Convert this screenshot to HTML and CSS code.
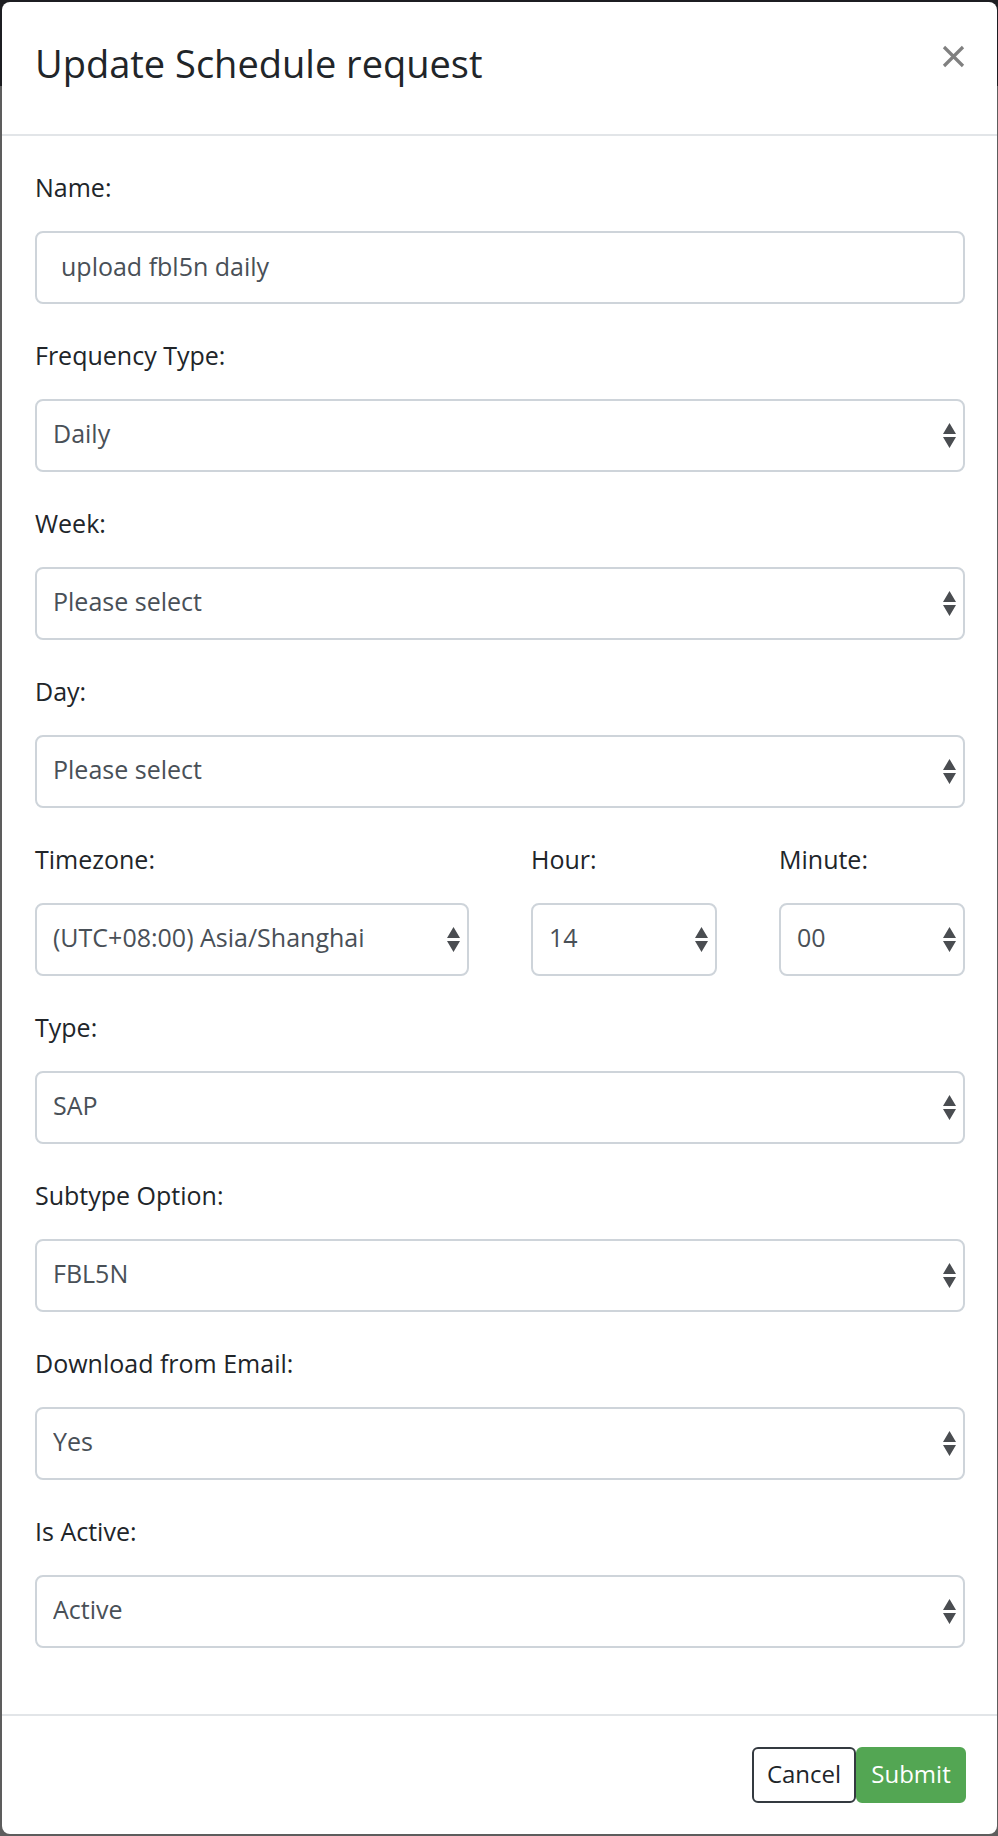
FILE: index.html
```html
<!DOCTYPE html>
<html lang="en">
<head>
<meta charset="utf-8">
<title>Update Schedule request</title>
<link rel="stylesheet" href="styles.css">
</head>
<body>
<div class="modal">
  <div class="modal-header">
    <h5 class="modal-title">Update Schedule request</h5>
    <button class="close" type="button" aria-label="Close">
      <svg viewBox="0 0 23 23" width="23" height="23"><path d="M2 2 L21 21 M21 2 L2 21" stroke="#808080" stroke-width="3.2" stroke-linecap="butt"/></svg>
    </button>
  </div>
  <form class="modal-body">
    <div class="form-group">
      <label>Name:</label>
      <input class="form-control input-name" type="text" value="upload fbl5n daily">
    </div>
    <div class="form-group">
      <label>Frequency Type:</label>
      <div class="select-wrap"><select class="form-control"><option>Daily</option></select><svg class="arrows" viewBox="0 0 13 25" width="13" height="25"><path d="M6.5 0 L13 11 L0 11 Z M0 14 L13 14 L6.5 25 Z" fill="#4a4d51"/></svg></div>
    </div>
    <div class="form-group">
      <label>Week:</label>
      <div class="select-wrap"><select class="form-control"><option>Please select</option></select><svg class="arrows" viewBox="0 0 13 25" width="13" height="25"><path d="M6.5 0 L13 11 L0 11 Z M0 14 L13 14 L6.5 25 Z" fill="#4a4d51"/></svg></div>
    </div>
    <div class="form-group">
      <label>Day:</label>
      <div class="select-wrap"><select class="form-control"><option>Please select</option></select><svg class="arrows" viewBox="0 0 13 25" width="13" height="25"><path d="M6.5 0 L13 11 L0 11 Z M0 14 L13 14 L6.5 25 Z" fill="#4a4d51"/></svg></div>
    </div>
    <div class="form-group row">
      <div class="col col-6">
        <label>Timezone:</label>
        <div class="select-wrap"><select class="form-control"><option>(UTC+08:00) Asia/Shanghai</option></select><svg class="arrows" viewBox="0 0 13 25" width="13" height="25"><path d="M6.5 0 L13 11 L0 11 Z M0 14 L13 14 L6.5 25 Z" fill="#4a4d51"/></svg></div>
      </div>
      <div class="col col-3">
        <label>Hour:</label>
        <div class="select-wrap"><select class="form-control"><option>14</option></select><svg class="arrows" viewBox="0 0 13 25" width="13" height="25"><path d="M6.5 0 L13 11 L0 11 Z M0 14 L13 14 L6.5 25 Z" fill="#4a4d51"/></svg></div>
      </div>
      <div class="col col-3">
        <label>Minute:</label>
        <div class="select-wrap"><select class="form-control"><option>00</option></select><svg class="arrows" viewBox="0 0 13 25" width="13" height="25"><path d="M6.5 0 L13 11 L0 11 Z M0 14 L13 14 L6.5 25 Z" fill="#4a4d51"/></svg></div>
      </div>
    </div>
    <div class="form-group">
      <label>Type:</label>
      <div class="select-wrap"><select class="form-control"><option>SAP</option></select><svg class="arrows" viewBox="0 0 13 25" width="13" height="25"><path d="M6.5 0 L13 11 L0 11 Z M0 14 L13 14 L6.5 25 Z" fill="#4a4d51"/></svg></div>
    </div>
    <div class="form-group">
      <label>Subtype Option:</label>
      <div class="select-wrap"><select class="form-control"><option>FBL5N</option></select><svg class="arrows" viewBox="0 0 13 25" width="13" height="25"><path d="M6.5 0 L13 11 L0 11 Z M0 14 L13 14 L6.5 25 Z" fill="#4a4d51"/></svg></div>
    </div>
    <div class="form-group">
      <label>Download from Email:</label>
      <div class="select-wrap"><select class="form-control"><option>Yes</option></select><svg class="arrows" viewBox="0 0 13 25" width="13" height="25"><path d="M6.5 0 L13 11 L0 11 Z M0 14 L13 14 L6.5 25 Z" fill="#4a4d51"/></svg></div>
    </div>
    <div class="form-group">
      <label>Is Active:</label>
      <div class="select-wrap"><select class="form-control"><option>Active</option></select><svg class="arrows" viewBox="0 0 13 25" width="13" height="25"><path d="M6.5 0 L13 11 L0 11 Z M0 14 L13 14 L6.5 25 Z" fill="#4a4d51"/></svg></div>
    </div>
  </form>
  <div class="modal-footer">
    <button class="btn btn-cancel" type="button">Cancel</button>
    <button class="btn btn-submit" type="button">Submit</button>
  </div>
</div>
</body>
</html>
```

FILE: styles.css
```css
* {
  box-sizing: border-box;
}

html, body {
  margin: 0;
  padding: 0;
}

body {
  min-height: 1836px;
  background: linear-gradient(#1c1d21 0, #1c1d21 86px, #5d5d5d 86px, #5d5d5d 100%);
  font-family: "Open Sans", "Noto Sans", sans-serif;
  color: #212529;
  padding: 2px 1px 2px 2px;
}

.modal {
  background: #ffffff;
  border-radius: 8px;
  min-height: 1832px;
  display: flex;
  flex-direction: column;
}

.modal-header {
  display: flex;
  align-items: flex-start;
  padding: 34px 32px 0 33px;
  height: 134px;
  border-bottom: 2px solid #e2e5e8;
}

.modal-title {
  margin: 0;
  font-size: 38px;
  line-height: 54px;
  font-weight: 400;
  color: #212529;
}

.close {
  margin-left: auto;
  margin-top: 9px;
  width: 23px;
  height: 23px;
  padding: 0;
  border: 0;
  background: transparent;
  display: block;
}

.close svg {
  display: block;
}

.modal-body {
  padding: 32px 32px 1px 33px;
  margin: 0;
  flex: 1;
}

.form-group {
  margin-bottom: 32px;
}

.form-group label {
  display: block;
  font-size: 25px;
  line-height: 39px;
  margin-bottom: 24px;
  color: #212529;
}

.form-control {
  display: block;
  width: 100%;
  height: 73px;
  border: 2px solid #ced4da;
  border-radius: 8px;
  background: #ffffff;
  font-family: "Open Sans", "Noto Sans", sans-serif;
  font-size: 25px;
  color: #495057;
  padding: 0 40px 5px 16px;
  margin: 0;
  outline: none;
}

.input-name {
  padding-left: 24px;
  padding-bottom: 4px;
}

select.form-control {
  -webkit-appearance: none;
  appearance: none;
}

.select-wrap {
  position: relative;
}

.arrows {
  position: absolute;
  right: 9px;
  top: 24px;
  pointer-events: none;
}

.row {
  display: flex;
  margin-left: -31px;
  margin-right: -31px;
}

.col {
  padding: 0 31px;
}

.col-6 {
  flex: 0 0 50%;
}

.col-3 {
  flex: 0 0 25%;
}

.modal-footer {
  display: flex;
  justify-content: flex-end;
  align-items: center;
  border-top: 2px solid #e2e5e8;
  padding: 31px 31px 31px 33px;
}

.btn {
  height: 56px;
  border-radius: 6px;
  font-family: "Open Sans", "Noto Sans", sans-serif;
  font-size: 24px;
  line-height: 1;
  padding: 0 10px 2px;
  margin: 0;
}

.btn-cancel {
  width: 104px;
  background: #ffffff;
  color: #212529;
  border: 2px solid #343a40;
}

.btn-submit {
  width: 110px;
  background: #53a653;
  color: #ffffff;
  border: 2px solid #53a653;
}
```
